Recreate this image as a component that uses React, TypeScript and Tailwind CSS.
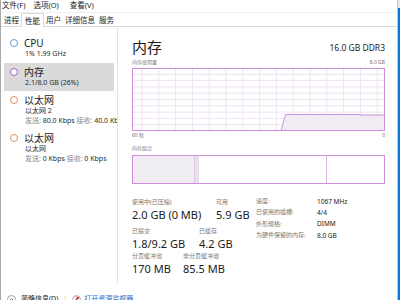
import React from "react";

interface SideEntry {
    title: string;
    ring: string;
    selected?: boolean;
    lines: React.ReactNode[];
}

const sideItems: SideEntry[] = [
    { title: "CPU", ring: "border-[#5b9fd8]", lines: ["1% 1.99 GHz"] },
    { title: "内存", ring: "border-[#a05ccc]", selected: true, lines: ["2.1/8.0 GB (26%)"] },
    {
        title: "以太网",
        ring: "border-[#d8955a]",
        lines: [
            "以太网 2",
            <>
                <span className="text-[#8a8a8a]">发送: </span>80.0 Kbps <span className="text-[#8a8a8a]">接收: </span>40.0 Kbps
            </>,
        ],
    },
    {
        title: "以太网",
        ring: "border-[#d8955a]",
        lines: [
            "以太网",
            <>
                <span className="text-[#8a8a8a]">发送: </span>0 Kbps <span className="text-[#8a8a8a]">接收: </span>0 Kbps
            </>,
        ],
    },
];

function SideItem({ item }: { item: SideEntry }) {
    return (
        <div className={`mx-[3px] pt-[3px] pb-[4px] ${item.selected ? "bg-[#dadada]" : ""}`}>
            <div className="flex items-center h-[12px]">
                <span className={`ml-[6px] w-[8px] h-[8px] rounded-full border bg-white ${item.ring}`} />
                <span className="ml-[6px] text-[10px] leading-none text-[#1a1a1a]">{item.title}</span>
            </div>
            {item.lines.map((line, i) => (
                <div key={i} className="pl-[21px] h-[9.5px] text-[7px] leading-[9.5px] text-[#2a2a2a] whitespace-nowrap">
                    {line}
                </div>
            ))}
        </div>
    );
}

function UsageGraph() {
    const w = 253;
    const h = 63;
    const cols: number[] = [];
    for (let x = 10; x < w; x += 16.8) cols.push(x);
    const rows: number[] = [];
    for (let i = 1; i < 10; i++) rows.push((i * h) / 10);

    return (
        <svg width={w} height={h} viewBox={`0 0 ${w} ${h}`} className="block">
            {cols.map((x) => (
                <line key={x} x1={x} y1={0} x2={x} y2={h} stroke="#eee3f2" strokeWidth="1" />
            ))}
            {rows.map((y) => (
                <line key={y} x1={0} y1={y} x2={w} y2={y} stroke="#eee3f2" strokeWidth="1" />
            ))}
            <polygon points="149,62.5 153.5,46.5 227,46.5 229,47 252.5,47 252.5,62.5" fill="#f1ecf4" />
            <polyline points="149,62.5 153.5,46.5 227,46.5 229,47 252.5,47" fill="none" stroke="#c690d8" strokeWidth="1" />
            <rect x={0.5} y={0.5} width={w - 1} height={h - 1} fill="none" stroke="#cc8edd" strokeWidth="1" />
        </svg>
    );
}

function Stat({ label, value, width }: { label: string; value: string; width: string }) {
    return (
        <div className={`${width} shrink-0`}>
            <div className="h-[10px] text-[6px] leading-[10px] text-[#777] whitespace-nowrap">{label}</div>
            <div className="h-[15px] text-[11px] leading-[15px] text-[#1a1a1a] whitespace-nowrap">{value}</div>
        </div>
    );
}

export default function App() {
    return (
        <div className="w-[400px] h-[300px] overflow-hidden flex bg-white font-['Noto_Sans','Noto_Sans_CJK_SC',sans-serif]">
            <div className="w-[397px] h-full flex flex-col border-l border-[#a9a9a9]">
                {/* menu */}
                <div className="h-[13px] shrink-0 flex items-center pl-[1px] text-[7.5px] text-[#1a1a1a] border-b border-[#f0f0f0]">
                    <span>文件(F)</span>
                    <span className="ml-[8px]">选项(O)</span>
                    <span className="ml-[11px]">查看(V)</span>
                </div>

                {/* tabs */}
                <div className="h-[14px] shrink-0 flex items-end border-b border-[#d9d9d9] text-[7.5px] text-[#1a1a1a]">
                    <div className="ml-[1px] px-[2px] h-[12px] leading-[12px]">进程</div>
                    <div className="px-[3px] h-[14px] leading-[14px] bg-white border border-b-0 border-[#d9d9d9] -mb-px">性能</div>
                    <div className="px-[2px] h-[12px] leading-[12px]">用户</div>
                    <div className="px-[2px] h-[12px] leading-[12px]">详细信息</div>
                    <div className="px-[2px] h-[12px] leading-[12px]">服务</div>
                </div>

                {/* body */}
                <div className="h-[258px] shrink-0 flex">
                    <div className="w-[117px] shrink-0 border-r border-[#e3e3e3] overflow-hidden pt-[7px] h-[256px]">
                        {sideItems.map((item, i) => (
                            <SideItem key={i} item={item} />
                        ))}
                    </div>

                    <div className="flex-1 pl-[14px] pr-[12px] pt-[10px]">
                        <div className="h-[20px] flex items-center justify-between">
                            <span className="text-[15px] leading-none text-[#1a1a1a]">内存</span>
                            <span className="text-[8.5px] leading-none text-[#1a1a1a] mt-[3px]">16.0 GB DDR3</span>
                        </div>
                        <div className="mt-[1px] h-[10px] flex items-center justify-between text-[5px] text-[#777]">
                            <span>内存使用量</span>
                            <span>8.0 GB</span>
                        </div>
                        <UsageGraph />
                        <div className="h-[10px] flex items-center justify-between text-[5px] text-[#777]">
                            <span>60 秒</span>
                            <span>0</span>
                        </div>
                        <div className="mt-[3px] h-[10px] flex items-center text-[5px] text-[#777]">内存组合</div>
                        <div className="mt-[1px] h-[29px] flex border border-[#cc8edd]">
                            <div className="w-[61px] bg-[#f1eef3]" />
                            <div className="w-[5px] bg-[#e9dfee] border-l border-[#dcc6e6]" />
                            <div className="flex-1" />
                            <div className="w-[58px] border-l border-[#dcb8e6]" />
                        </div>

                        <div className="mt-[13px] flex">
                            <div className="w-[124px] shrink-0 flex flex-col">
                                <div className="flex">
                                    <Stat label="使用中(已压缩)" value="2.0 GB (0 MB)" width="w-[84px]" />
                                    <Stat label="可用" value="5.9 GB" width="w-[40px]" />
                                </div>
                                <div className="flex mt-[4px]">
                                    <Stat label="已提交" value="1.8/9.2 GB" width="w-[67px]" />
                                    <Stat label="已缓存" value="4.2 GB" width="w-[50px]" />
                                </div>
                                <div className="flex">
                                    <Stat label="分页缓冲池" value="170 MB" width="w-[51px]" />
                                    <Stat label="非分页缓冲池" value="85.5 MB" width="w-[60px]" />
                                </div>
                            </div>
                            <div className="-mt-[1px] grid grid-cols-[61px_auto] auto-rows-[11.3px] items-center text-[6px]">
                                <span className="text-[#777]">速度:</span>
                                <span className="text-[#1a1a1a] text-[6.5px]">1067 MHz</span>
                                <span className="text-[#777]">已使用的插槽:</span>
                                <span className="text-[#1a1a1a] text-[6.5px]">4/4</span>
                                <span className="text-[#777]">外形规格:</span>
                                <span className="text-[#1a1a1a] text-[6.5px]">DIMM</span>
                                <span className="text-[#777]">为硬件保留的内存:</span>
                                <span className="text-[#1a1a1a] text-[6.5px]">8.0 GB</span>
                            </div>
                        </div>
                    </div>
                </div>

                {/* footer */}
                <div className="h-[28px] shrink-0 flex items-center text-[7px] text-[#1a1a1a]">
                    <svg width="9" height="9" viewBox="0 0 9 9" className="ml-[6px]">
                        <circle cx="4.5" cy="4.5" r="4" fill="white" stroke="#8c8c8c" strokeWidth="0.8" />
                        <polyline points="2.6,5.4 4.5,3.5 6.4,5.4" fill="none" stroke="#555" strokeWidth="0.8" />
                    </svg>
                    <span className="ml-[5px]">简略信息(D)</span>
                    <span className="ml-[5px] text-[#bbb]">|</span>
                    <svg width="9" height="9" viewBox="0 0 9 9" className="ml-[5px]">
                        <circle cx="4.5" cy="4.5" r="4" fill="#f4f4f4" stroke="#9a9a9a" strokeWidth="0.7" />
                        <path d="M4.5 4.5 L4.5 1.2 A3.3 3.3 0 0 1 7.6 3.6 Z" fill="#d83b3b" />
                        <circle cx="4.5" cy="4.5" r="0.8" fill="#555" />
                    </svg>
                    <span className="ml-[3px] text-[#1e66c8]">打开资源监视器</span>
                </div>
            </div>
            <div className="w-px h-full bg-[#c4c4c4]" />
            <div className="w-[2px] h-full flex flex-col">
                <div className="h-[8px] bg-[#e8e8e8]" />
                <div className="flex-1 bg-[#0a78d7]" />
            </div>
        </div>
    );
}
